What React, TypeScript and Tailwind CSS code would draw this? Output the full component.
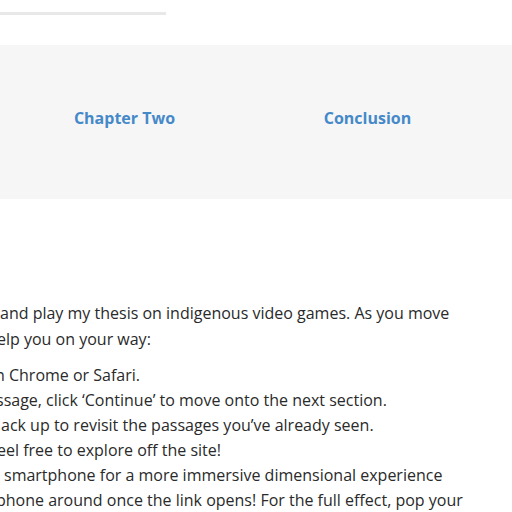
import React from "react";

const lines = [
  { text: "and play my thesis on indigenous video games. As you move", ml: "ml-[0px]" },
  { text: "elp you on your way:", ml: "ml-[-3px]" },
];

const tips = [
  { text: "n Chrome or Safari.", ml: "ml-[-5px]" },
  { text: "ssage, click \u2018Continue\u2019 to move onto the next section.", ml: "ml-[-4px]" },
  { text: "ack up to revisit the passages you\u2019ve already seen.", ml: "ml-[1px]" },
  { text: "eel free to explore off the site!", ml: "ml-[-3px]" },
  { text: "smartphone for a more immersive dimensional experience", ml: "ml-[4px]" },
  { text: "phone around once the link opens! For the full effect, pop your", ml: "ml-[-4px]" },
];

export default function App() {
  return (
    <div className="w-[512px] h-[512px] overflow-hidden bg-white font-['Open_Sans',sans-serif] text-[#2a2a2a]">
      <div className="h-[45px] pt-[12px]">
        <div className="w-[166px] h-[3px] bg-[#e8e8e8]"></div>
      </div>
      <nav className="h-[154px] bg-[#f6f6f6] flex items-center pb-[8px]">
        <div className="flex ml-[3px]">
          <a className="w-[243px] text-center text-[16px] font-bold text-[#4589c9]">Chapter Two</a>
          <a className="w-[243px] text-center text-[16px] font-bold text-[#4589c9]">Conclusion</a>
        </div>
      </nav>
      <div className="pt-[101px] text-[16px]">
        <div className="leading-[26px]">
          {lines.map((l) => (
            <div key={l.text} className={"whitespace-nowrap " + l.ml}>
              {l.text}
            </div>
          ))}
        </div>
        <ul className="mt-[11px] leading-[25px]">
          {tips.map((t) => (
            <li key={t.text} className={"whitespace-nowrap " + t.ml}>
              {t.text}
            </li>
          ))}
        </ul>
      </div>
    </div>
  );
}
